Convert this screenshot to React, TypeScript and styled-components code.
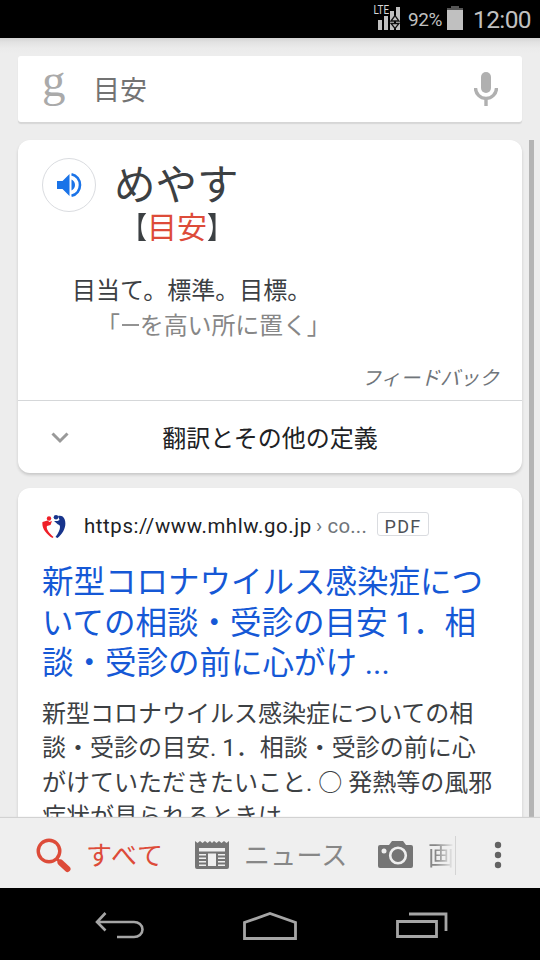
import React from "react";
import styled, { createGlobalStyle, css } from "styled-components";

const GlobalStyle = createGlobalStyle`
  * { box-sizing: border-box; }
  html, body { margin: 0; padding: 0; background: #000; }
  body { font-family: Roboto, "Noto Sans CJK JP", sans-serif; overflow: hidden; }
`;

const Screen = styled.div`
  width: 540px;
  height: 960px;
  display: flex;
  flex-direction: column;
  overflow: hidden;
  background: #ededed;
`;

const StatusBar = styled.header`
  flex: 0 0 38px;
  height: 38px;
  background: #000;
  color: #c0c0c0;
  display: flex;
  justify-content: flex-end;
  align-items: center;
  padding-right: 9px;
`;

const Battery = styled.span`
  width: 34px;
  margin-left: 7px;
  font-size: 19px;
  line-height: 36px;
  letter-spacing: -0.4px;
  padding-top: 2px;
`;

const BatterySlot = styled.span`
  display: flex;
  margin: -2px 0 0 5px;
`;

const Clock = styled.span`
  width: 58px;
  margin-left: 10px;
  font-size: 24.5px;
  line-height: 36px;
  letter-spacing: -0.6px;
  white-space: nowrap;
  padding-top: 2px;
`;

const Content = styled.main`
  flex: 0 0 780px;
  display: flex;
  flex-direction: column;
  gap: 18px;
  padding: 18px 0 0 18px;
  overflow: hidden;
  background: linear-gradient(#d4d4d4 0, #e2e2e2 4px, #ebebeb 10px, #ededed 16px);
`;

const SearchBox = styled.div`
  flex: 0 0 66px;
  width: 504px;
  display: flex;
  align-items: center;
  padding: 0 24px 0 24px;
  background: #fff;
  border-radius: 3px;
  box-shadow: 0 2px 1px #d6d6d6;
`;

const Logo = styled.span`
  width: 51px;
  font: 47px/50px "Liberation Serif", serif;
  color: #aaa;
  margin-top: -19px;
`;

const Query = styled.span`
  flex: 1;
  font-size: 27px;
  line-height: 40px;
  padding-top: 3px;
  color: #737373;
`;

const Scroller = styled.div`
  flex: 1;
  display: grid;
  grid-template-columns: 504px 5px;
  column-gap: 7px;
  min-height: 0;
`;

const Cards = styled.div`
  display: flex;
  flex-direction: column;
  gap: 15px;
  min-height: 0;
`;

const ScrollThumb = styled.div`
  background: #b4b4b4;
`;

const Card = styled.section<{ $h: number }>`
  flex: 0 0 ${(p) => p.$h}px;
  background: #fff;
  border-radius: 12px;
  box-shadow: 0 2px 3px rgba(32, 33, 36, 0.18);
`;

const WordRow = styled.div`
  height: 118px;
  display: flex;
  gap: 18px;
  padding: 18px 24px 0;
`;

const SoundButton = styled.button`
  width: 54px;
  height: 54px;
  padding: 0;
  border: 1px solid #dadce0;
  border-radius: 50%;
  background: #fff;
  display: flex;
  align-items: center;
  justify-content: center;
`;

const Word = styled.div`
  display: flex;
  flex-direction: column;
  padding-top: 1px;
  color: #3c4043;
`;

const Reading = styled.div`
  font-size: 41.5px;
  line-height: 53px;
  height: 50px;
`;

const Kanji = styled.div`
  font-size: 30px;
  line-height: 38px;
  padding-left: 3px;
`;

const Bracket = styled.span<{ $side: "left" | "right" }>`
  display: inline-block;
  transform: scaleX(0.85);
  transform-origin: ${(p) => (p.$side === "left" ? "right" : "left")} center;
`;

const Accent = styled.span`
  color: #dd4b39;
`;

const Meaning = styled.div`
  height: 101px;
  padding: 16px 0 0 54px;
  font-size: 24px;
  line-height: 35px;
  color: #3c4043;
  white-space: nowrap;
`;

const Example = styled.div`
  padding-left: 24px;
  color: #878787;
  letter-spacing: -0.15px;
`;

const Dash = styled.span`
  display: inline-block;
  width: 17px;
  height: 2px;
  margin: 0 1px 0 2px;
  vertical-align: 8px;
  background: #939393;
`;

const Feedback = styled.div`
  height: 42px;
  padding-right: 23px;
  text-align: right;
  font-size: 19.7px;
  line-height: 39px;
  font-style: italic;
  color: #70757a;
  border-bottom: 1px solid #d5d7d9;
`;

const MoreRow = styled.div`
  height: 72px;
  display: grid;
  grid-template-columns: 84px 336px 84px;
  align-items: center;
  justify-items: center;
  font-size: 24px;
  line-height: 69px;
  color: #202124;
  padding-top: 4px;
`;

const Chevron = styled.svg`
  margin-top: -4px;
`;

const Source = styled.div`
  height: 74px;
  display: flex;
  align-items: center;
  padding: 2px 24px 0;
  font-size: 20.4px;
  color: #202124;
  white-space: nowrap;
`;

const Url = styled.span`
  width: 227px;
  margin-left: 18px;
  letter-spacing: 0.6px;
`;

const Crumb = styled.span`
  width: 61px;
  margin-left: 5px;
  letter-spacing: 0.2px;
  color: #70757a;
`;

const PdfTag = styled.span`
  width: 52px;
  height: 24px;
  margin-top: -5px;
  border: 1px solid #dadce0;
  border-radius: 3px;
  font-size: 18px;
  line-height: 27px;
  letter-spacing: 1.3px;
  text-align: center;
  color: #4d5156;
`;

const lines = css`
  margin: 0;
  padding-left: 24px;
  white-space: nowrap;
`;

const Title = styled.h3`
  ${lines}
  height: 134px;
  padding-top: 1px;
  font-weight: 400;
  font-size: 31.5px;
  line-height: 40.6px;
  color: #1558d6;
`;

const Snippet = styled.p`
  ${lines}
  padding-top: 1px;
  font-size: 24px;
  line-height: 34.4px;
  color: #3c4043;
`;

const Line = styled.span`
  display: block;
`;

const TabBar = styled.nav`
  flex: 0 0 70px;
  height: 70px;
  position: relative;
  display: flex;
  align-items: center;
  padding: 4px 0 0 35px;
  background: #efefef;
  box-shadow: 0 -1px 1px #d2d2d2;
`;

const TabLabel = styled.span<{ $w: number; $active?: boolean }>`
  width: ${(p) => p.$w}px;
  font-size: 26px;
  letter-spacing: ${(p) => (p.$active ? 0.9 : 0.2)}px;
  line-height: 64px;
  padding-top: 1px;
  white-space: nowrap;
  overflow: hidden;
  color: ${(p) => (p.$active ? "#dd4b39" : "#878787")};
`;

const FadedLabel = styled(TabLabel)`
  mask-image: linear-gradient(90deg, #000 30%, transparent 105%);
`;

const Divider = styled.span`
  width: 1px;
  height: 39px;
  margin-left: 2px;
  background: #d4d4d4;
`;

const TabIcon = styled.svg<{ $ml?: number; $mr?: number }>`
  flex: none;
  margin-left: ${(p) => p.$ml || 0}px;
  margin-right: ${(p) => p.$mr || 0}px;
`;

const NavBar = styled.footer`
  flex: 0 0 72px;
  display: flex;
  align-items: center;
  justify-content: space-between;
  padding: 4px 92px 0 94px;
  background: #000;
`;

const HomeIcon = styled.svg`
  margin-left: -3px;
`;

const Signal = () => (
  <svg width="28" height="32" viewBox="0 0 28 32">
    <g fill="#c0c0c0">
      <rect x="5" y="17" width="4" height="10" />
      <rect x="11" y="13" width="4" height="14" />
      <rect x="17" y="8" width="4" height="19" />
      <rect x="23" y="4" width="4" height="23" />
    </g>
    <path d="M18 18 22 12.500l4 5.500zM18 20.500h8L22 25.500z" fill="#c0c0c0" stroke="#111" strokeWidth="1.300" />
    <text x="0.500" y="11" fontSize="12.500" textLength="15.500" lengthAdjust="spacingAndGlyphs" fill="#d8d8d8">LTE</text>
  </svg>
);

const BatteryIcon = () => (
  <svg width="16" height="24" viewBox="0 0 16 24">
    <path d="M4 0h8v2h4v3H0V2h4z" fill="#555" />
    <path d="M0 4h16v20H0z" fill="#c0c0c0" />
  </svg>
);

const Mic = () => (
  <svg width="24" height="34" viewBox="0 0 24 34">
    <rect x="7" y="0" width="10" height="21" rx="5" fill="#b0b0b0" />
    <path d="M1.500 16a10.500 10.500 0 0 0 21 0M12 26v8" fill="none" stroke="#b0b0b0" strokeWidth="3.400" />
  </svg>
);

const Speaker = () => (
  <svg width="26" height="26" viewBox="0 0 26 26">
    <path d="M1 9h5.500l7-7v22l-7-7H1zM15.500 7.500c2.300 1 3.500 3 3.500 5.500s-1.200 4.500-3.500 5.500z" fill="#1a73e8" />
    <path d="M15.500 2.300c5.200 1 8.500 5.500 8.500 10.700s-3.300 9.700-8.500 10.700" fill="none" stroke="#1a73e8" strokeWidth="2.600" />
  </svg>
);

const Favicon = () => (
  <svg width="24" height="26" viewBox="0 0 24 26">
    <path d="M0.500 9C-0.500 15 4 21 10.500 25L11.500 24C6 19 4 15.500 5 13l3.500-1 1.500-4-2.500 1-2-1.500z" fill="#ef2028" />
    <circle cx="7" cy="5.500" r="2.200" fill="#ef2028" />
    <path d="M12 8l4 3.500c3 0 3 5-2.500 12.500l2 1C22 20 25 12 22.500 6c-1-3-4-4-6.500-3l1.500 4-2 1z" fill="#17348c" />
    <circle cx="14" cy="4.200" r="2.300" fill="#17348c" />
  </svg>
);

const SearchIcon = () => (
  <TabIcon width="36" height="36" viewBox="0 0 36 36" $mr={15}>
    <circle cx="14" cy="14" r="10.800" fill="none" stroke="#dd4b39" strokeWidth="3.400" />
    <path d="M21.500 21.500 25 25" stroke="#dd4b39" strokeWidth="3" />
    <path d="M25.500 25.500 32.500 32" stroke="#dd4b39" strokeWidth="6" strokeLinecap="round" />
  </TabIcon>
);

const NewsIcon = () => (
  <TabIcon width="34" height="30" viewBox="0 0 34 30" $ml={31} $mr={15}>
    <path d="M0 1l2.500 2L5 1l2.500 2L10 1l2.500 2L15 1l2 2 2-2 2.500 2L24 1l2.500 2L29 1l2.500 2L34 1v26q0 2-2 2H2q-2 0-2-2z" fill="#757575" />
    <path d="M4 8h26v3.500H4zM13 13.500h8V26h-8zM4 14h7v1.500H4zM4 17.500h7V19H4zM4 21h7v1.500H4zM4 24.500h7V26H4zM23 14h7v1.500h-7zM23 17.500h7V19h-7zM23 21h7v1.500h-7zM23 24.500h7V26h-7z" fill="#efefef" />
  </TabIcon>
);

const CameraIcon = () => (
  <TabIcon width="35" height="28" viewBox="0 0 35 28" $ml={29} $mr={15}>
    <path d="M2 4h9l3-4h11l3 4h5q2 0 2 2v19q0 2-2 2H2q-2 0-2-2V6q0-2 2-2z" fill="#757575" />
    <circle cx="20" cy="14.500" r="7.800" fill="#757575" stroke="#efefef" strokeWidth="2.600" />
    <circle cx="6" cy="10" r="2.500" fill="#efefef" />
  </TabIcon>
);

export default function App() {
  return (
    <>
      <GlobalStyle />
      <Screen>
        <StatusBar>
          <Signal />
          <Battery>92%</Battery>
          <BatterySlot>
            <BatteryIcon />
          </BatterySlot>
          <Clock>12:00</Clock>
        </StatusBar>
        <Content>
          <SearchBox>
            <Logo>g</Logo>
            <Query>目安</Query>
            <Mic />
          </SearchBox>
          <Scroller>
            <Cards>
              <Card $h={333}>
                <WordRow>
                  <SoundButton aria-label="発音"><Speaker /></SoundButton>
                  <Word>
                    <Reading>めやす</Reading>
                    <Kanji>
                      <Bracket $side="left">【</Bracket>
                      <Accent>目安</Accent>
                      <Bracket $side="right">】</Bracket>
                    </Kanji>
                  </Word>
                </WordRow>
                <Meaning>
                  目当て。標準。目標。
                  <Example>「<Dash />を高い所に置く」</Example>
                </Meaning>
                <Feedback>フィードバック</Feedback>
                <MoreRow>
                  <Chevron width="18" height="12" viewBox="0 0 18 12">
                    <path d="M1.500 1.500 9 9l7.500-7.500" fill="none" stroke="#999" strokeWidth="3" />
                  </Chevron>
                  <span>翻訳とその他の定義</span>
                </MoreRow>
              </Card>
              <Card $h={360}>
                <Source>
                  <Favicon />
                  <Url>https://www.mhlw.go.jp</Url>
                  <Crumb>› co...</Crumb>
                  <PdfTag>PDF</PdfTag>
                </Source>
                <Title>
                  <Line>新型コロナウイルス感染症につ</Line>
                  <Line>いての相談・受診の目安 1．相</Line>
                  <Line>談・受診の前に心がけ ...</Line>
                </Title>
                <Snippet>
                  <Line>新型コロナウイルス感染症についての相</Line>
                  <Line>談・受診の目安. 1．相談・受診の前に心</Line>
                  <Line>がけていただきたいこと. ○ 発熱等の風邪</Line>
                  <Line>症状が見られるときは</Line>
                </Snippet>
              </Card>
            </Cards>
            <ScrollThumb />
          </Scroller>
        </Content>
        <TabBar>
          <SearchIcon />
          <TabLabel $w={78} $active>すべて</TabLabel>
          <NewsIcon />
          <TabLabel $w={105}>ニュース</TabLabel>
          <CameraIcon />
          <FadedLabel $w={25}>画像</FadedLabel>
          <Divider />
          <TabIcon width="8" height="30" viewBox="0 0 8 30" $ml={38}>
            <circle cx="4" cy="5" r="3.200" fill="#636363" />
            <circle cx="4" cy="15" r="3.200" fill="#636363" />
            <circle cx="4" cy="25" r="3.200" fill="#636363" />
          </TabIcon>
        </TabBar>
        <NavBar>
          <svg width="52" height="28" viewBox="0 0 52 28" fill="none" stroke="#a5a5a5" strokeWidth="2.600">
            <path d="M11.500 1 3 10l8.500 8.500M3 10h37c4.500 0 8.500 3 8.500 7.500S44.500 25 40 25H23" />
          </svg>
          <HomeIcon width="54" height="30" viewBox="0 0 54 30" fill="none" stroke="#a5a5a5" strokeWidth="2.800">
            <path d="M1.500 27.500v-16L27 2.500l25.500 9v16z" />
          </HomeIcon>
          <svg width="52" height="28" viewBox="0 0 52 28" fill="none" stroke="#a5a5a5" strokeWidth="2.800">
            <path d="M1.500 9.500h39v15h-39zM13 2h37v17" />
          </svg>
        </NavBar>
      </Screen>
    </>
  );
}
